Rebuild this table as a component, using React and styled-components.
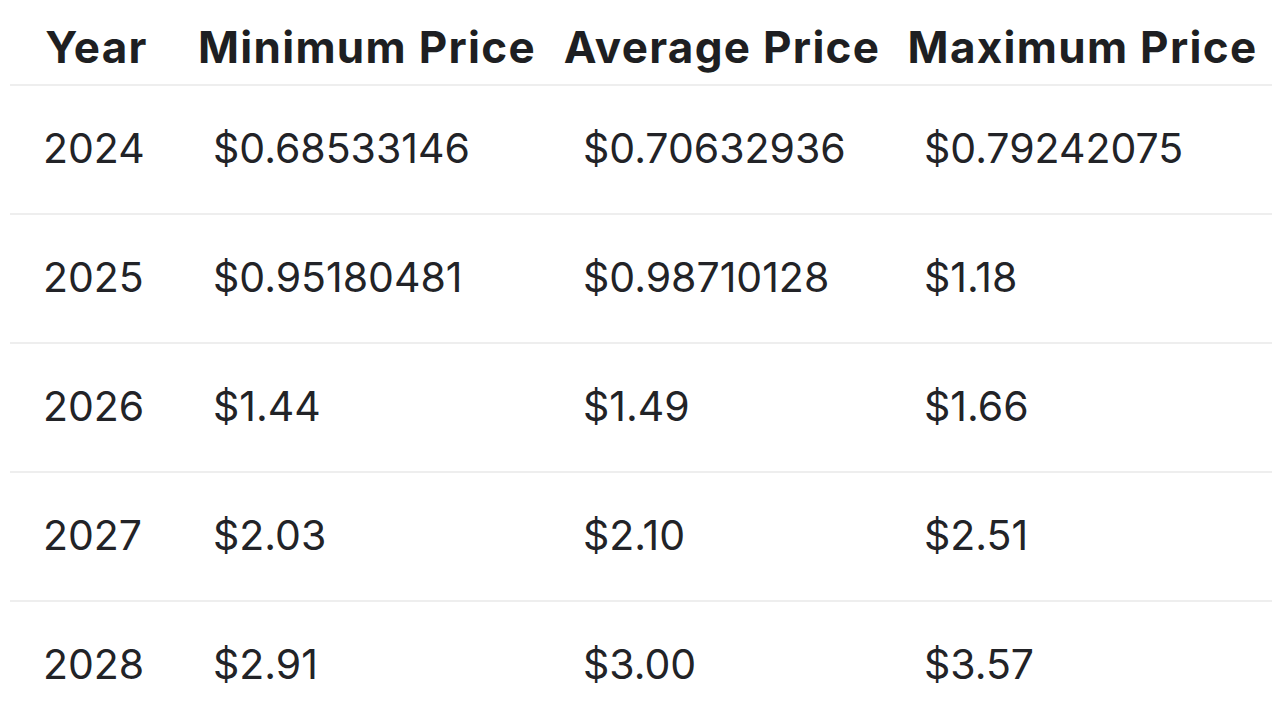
import React from "react";
import styled, { createGlobalStyle } from "styled-components";

const Global = createGlobalStyle`
  html, body { margin: 0; padding: 0; background: #ffffff; }
  body { font-family: "Inter", "Noto Sans", sans-serif; color: #222327; }
`;

const Wrap = styled.div`
  padding: 0 10px;
  width: 1280px;
  box-sizing: border-box;
  overflow: hidden;
  height: 722px;
`;

const Table = styled.table`
  width: 1262px;
  border-collapse: collapse;
  table-layout: fixed;
`;

const Th = styled.th`
  height: 85px;
  padding: 10px 0 0;
  box-sizing: border-box;
  text-align: center;
  font-size: 44px;
  letter-spacing: 1.3px;
  font-weight: 700;
  color: #1e1f22;
  white-space: nowrap;
  border-bottom: 2px solid #eeeeee;
`;

const Td = styled.td`
  height: 129px;
  box-sizing: border-box;
  padding: 0 0 3px ${(p) => p.$pad}px;
  font-size: 41px;
  font-weight: 400;
  color: #222327;
  white-space: nowrap;
  border-bottom: 2px solid #eeeeee;
`;

const cols = [
  { w: 173, pad: 33, label: "Year" },
  { w: 368, pad: 30, label: "Minimum Price" },
  { w: 342, pad: 32, label: "Average Price" },
  { w: 379, pad: 31, label: "Maximum Price" },
];

const rows = [
  ["2024", "$0.68533146", "$0.70632936", "$0.79242075"],
  ["2025", "$0.95180481", "$0.98710128", "$1.18"],
  ["2026", "$1.44", "$1.49", "$1.66"],
  ["2027", "$2.03", "$2.10", "$2.51"],
  ["2028", "$2.91", "$3.00", "$3.57"],
];

export default function App() {
  return (
    <>
      <Global />
      <Wrap>
        <Table>
          <colgroup>
            {cols.map((c) => (
              <col key={c.label} style={{ width: c.w }} />
            ))}
          </colgroup>
          <thead>
            <tr>
              {cols.map((c) => (
                <Th key={c.label}>{c.label}</Th>
              ))}
            </tr>
          </thead>
          <tbody>
            {rows.map((r) => (
              <tr key={r[0]}>
                {r.map((v, i) => (
                  <Td key={i} $pad={cols[i].pad}>
                    {v}
                  </Td>
                ))}
              </tr>
            ))}
          </tbody>
        </Table>
      </Wrap>
    </>
  );
}
